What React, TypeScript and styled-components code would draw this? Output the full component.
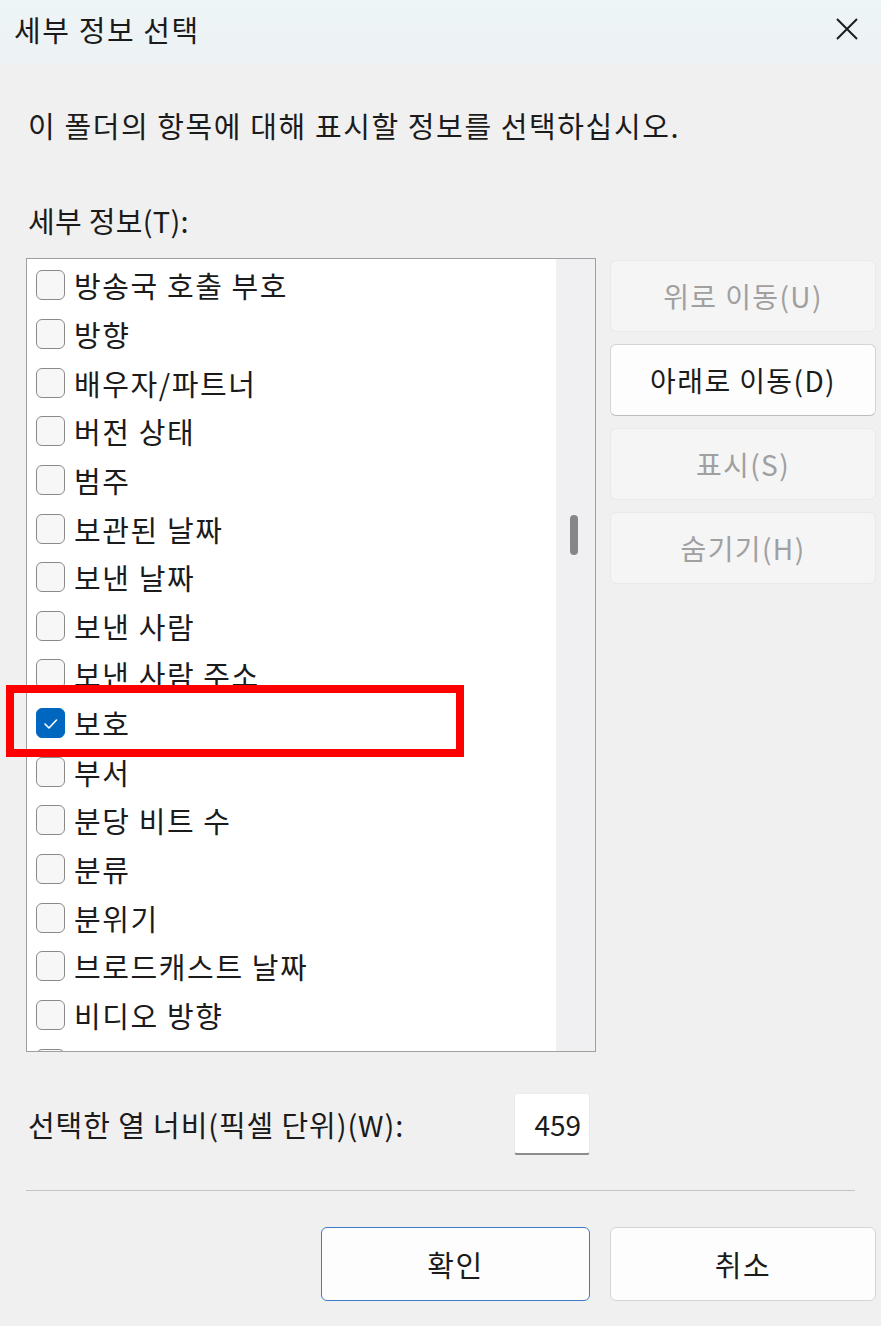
import styled, { createGlobalStyle } from "styled-components";

const GlobalStyle = createGlobalStyle`
  html, body {
    margin: 0;
    padding: 0;
    background: #f0f0f1;
  }
  body {
    font-family: "Noto Sans CJK KR", "Noto Sans", sans-serif;
    color: #1b1b1b;
  }
`;

const items = [
  "방송국 호출 부호",
  "방향",
  "배우자/파트너",
  "버전 상태",
  "범주",
  "보관된 날짜",
  "보낸 날짜",
  "보낸 사람",
  "보낸 사람 주소",
  "보호",
  "부서",
  "분당 비트 수",
  "분류",
  "분위기",
  "브로드캐스트 날짜",
  "비디오 방향",
  "비트 전송률",
];

const checked = "보호";

const sideButtons = [
  { label: "위로 이동(U)", enabled: false },
  { label: "아래로 이동(D)", enabled: true },
  { label: "표시(S)", enabled: false },
  { label: "숨기기(H)", enabled: false },
];

export default function App() {
  return (
    <>
      <GlobalStyle />
      <Window>
        <TitleBar>
          <Title>세부 정보 선택</Title>
          <CloseButton aria-label="닫기">
            <svg width="24" height="24" viewBox="0 0 24 24">
              <path d="M2 2 L22 22 M22 2 L2 22" stroke="#1c1c1c" strokeWidth="2" fill="none" />
            </svg>
          </CloseButton>
        </TitleBar>

        <Body>
          <Description>이 폴더의 항목에 대해 표시할 정보를 선택하십시오.</Description>
          <FieldLabel>세부 정보(T):</FieldLabel>

          <Main>
            <ListBox>
              <ListRows>
                {items.map((item) => (
                  <Row key={item}>
                    <Check $checked={item === checked}>
                      {item === checked && (
                        <svg width="29" height="29" viewBox="0 0 29 29">
                          <polyline
                            points="9,15 13,19 20.5,11"
                            stroke="#ffffff"
                            strokeWidth="1.6"
                            fill="none"
                            strokeLinecap="round"
                            strokeLinejoin="round"
                          />
                        </svg>
                      )}
                    </Check>
                    <RowText>{item}</RowText>
                  </Row>
                ))}
              </ListRows>
              <ScrollTrack>
                <ScrollThumb />
              </ScrollTrack>
            </ListBox>

            <SideButtons>
              {sideButtons.map((b) => (
                <PushButton key={b.label} $enabled={b.enabled}>
                  {b.label}
                </PushButton>
              ))}
            </SideButtons>
          </Main>

          <WidthRow>
            <WidthLabel>선택한 열 너비(픽셀 단위)(W):</WidthLabel>
            <WidthInput>459</WidthInput>
          </WidthRow>

          <Separator />

          <Footer>
            <DialogButton $primary>확인</DialogButton>
            <DialogButton>취소</DialogButton>
          </Footer>
        </Body>

        <Highlight />
      </Window>
    </>
  );
}

const Window = styled.div`
  position: relative;
  width: 881px;
  height: 1326px;
  overflow: hidden;
  background: #f0f0f1;
`;

const TitleBar = styled.div`
  height: 64px;
  display: flex;
  align-items: center;
  justify-content: space-between;
  padding-left: 14px;
  background: linear-gradient(180deg, #eef5f7 0%, #edf2f4 100%);
`;

const Title = styled.div`
  font-size: 29px;
  letter-spacing: 1.6px;
  line-height: 36px;
  margin-top: -6px;
`;

const CloseButton = styled.div`
  width: 66px;
  height: 60px;
  display: flex;
  align-items: center;
  justify-content: center;
  margin-right: 1px;
  margin-top: -6px;
`;

const Body = styled.div`
  padding: 0 5px 0 26px;
`;

const Text = styled.div<{ $spacing?: number }>`
  font-size: 29px;
  letter-spacing: ${(p) => p.$spacing ?? 1.6}px;
  line-height: 36px;
  padding-left: 2px;
`;

const Description = styled(Text)`
  margin-top: 43px;
`;

const FieldLabel = styled(Text).attrs({ $spacing: 0.3 })`
  margin-top: 59px;
`;

const Main = styled.div`
  margin-top: 20px;
  display: flex;
  gap: 14px;
  align-items: flex-start;
`;

const ListBox = styled.div`
  width: 570px;
  height: 794px;
  box-sizing: border-box;
  border: 1px solid #a0a0a0;
  background: #ffffff;
  display: flex;
  overflow: hidden;
`;

const ListRows = styled.div`
  flex: 1;
  padding: 2px 0 0 9px;
  overflow: hidden;
`;

const Row = styled.div`
  height: 48.65px;
  display: flex;
  align-items: center;
  gap: 9px;
`;

const Check = styled.div<{ $checked: boolean }>`
  width: 29px;
  height: 30px;
  flex: none;
  box-sizing: border-box;
  border-radius: 6px;
  border: 1.5px solid ${(p) => (p.$checked ? "#0067c0" : "#8a8a8a")};
  background: ${(p) => (p.$checked ? "#0067c0" : "#f7f7f7")};
  display: flex;
  align-items: center;
  justify-content: center;
  svg {
    margin: -1.5px;
  }
`;

const RowText = styled.span`
  font-size: 29px;
  letter-spacing: 1.6px;
  line-height: 36px;
  white-space: nowrap;
`;

const ScrollTrack = styled.div`
  width: 39px;
  flex: none;
  background: #f0f0f2;
  padding: 256px 0 0 14px;
  box-sizing: border-box;
`;

const ScrollThumb = styled.div`
  width: 8px;
  height: 40px;
  border-radius: 4px;
  background: #868686;
`;

const SideButtons = styled.div`
  margin-top: 2px;
  display: flex;
  flex-direction: column;
  gap: 12px;
`;

const PushButton = styled.div<{ $enabled: boolean }>`
  width: 266px;
  height: 72px;
  box-sizing: border-box;
  border-radius: 6px;
  display: flex;
  align-items: center;
  justify-content: center;
  font-size: 28px;
  letter-spacing: 1.4px;
  border: 1px solid ${(p) => (p.$enabled ? "#d4d4d4" : "#e9e9ea")};
  border-bottom-color: ${(p) => (p.$enabled ? "#bdbdbd" : "#e9e9ea")};
  background: ${(p) => (p.$enabled ? "#fdfdfd" : "#f5f5f6")};
  color: ${(p) => (p.$enabled ? "#1b1b1b" : "#a0a0a0")};
`;

const WidthRow = styled.div`
  margin-top: 41px;
  display: grid;
  grid-template-columns: 488px 76px;
  align-items: center;
`;

const WidthLabel = styled(Text).attrs({ $spacing: 0.9 })``;

const WidthInput = styled.div`
  height: 62px;
  box-sizing: border-box;
  background: #ffffff;
  border: 1px solid #ececec;
  border-bottom: 2px solid #8c8c8c;
  border-radius: 3px;
  display: flex;
  align-items: center;
  justify-content: flex-end;
  padding-right: 8px;
  font-size: 28px;
`;

const Separator = styled.div`
  margin: 35px 21px 0 0;
  height: 1px;
  background: #c4c4c4;
`;

const Footer = styled.div`
  margin-top: 36px;
  display: flex;
  justify-content: flex-end;
  gap: 20px;
`;

const DialogButton = styled.div<{ $primary?: boolean }>`
  width: ${(p) => (p.$primary ? "269px" : "266px")};
  height: 74px;
  box-sizing: border-box;
  border-radius: 6px;
  background: #fdfdfd;
  border: ${(p) => (p.$primary ? "1.5px solid #3f7cc0" : "1px solid #d4d4d4")};
  display: flex;
  align-items: center;
  justify-content: center;
  font-size: 29px;
  letter-spacing: 1.6px;
  color: #1b1b1b;
`;

const Highlight = styled.div`
  position: absolute;
  left: 6px;
  top: 685px;
  width: 458px;
  height: 72px;
  box-sizing: border-box;
  border: 8px solid #fe0000;
  pointer-events: none;
`;
